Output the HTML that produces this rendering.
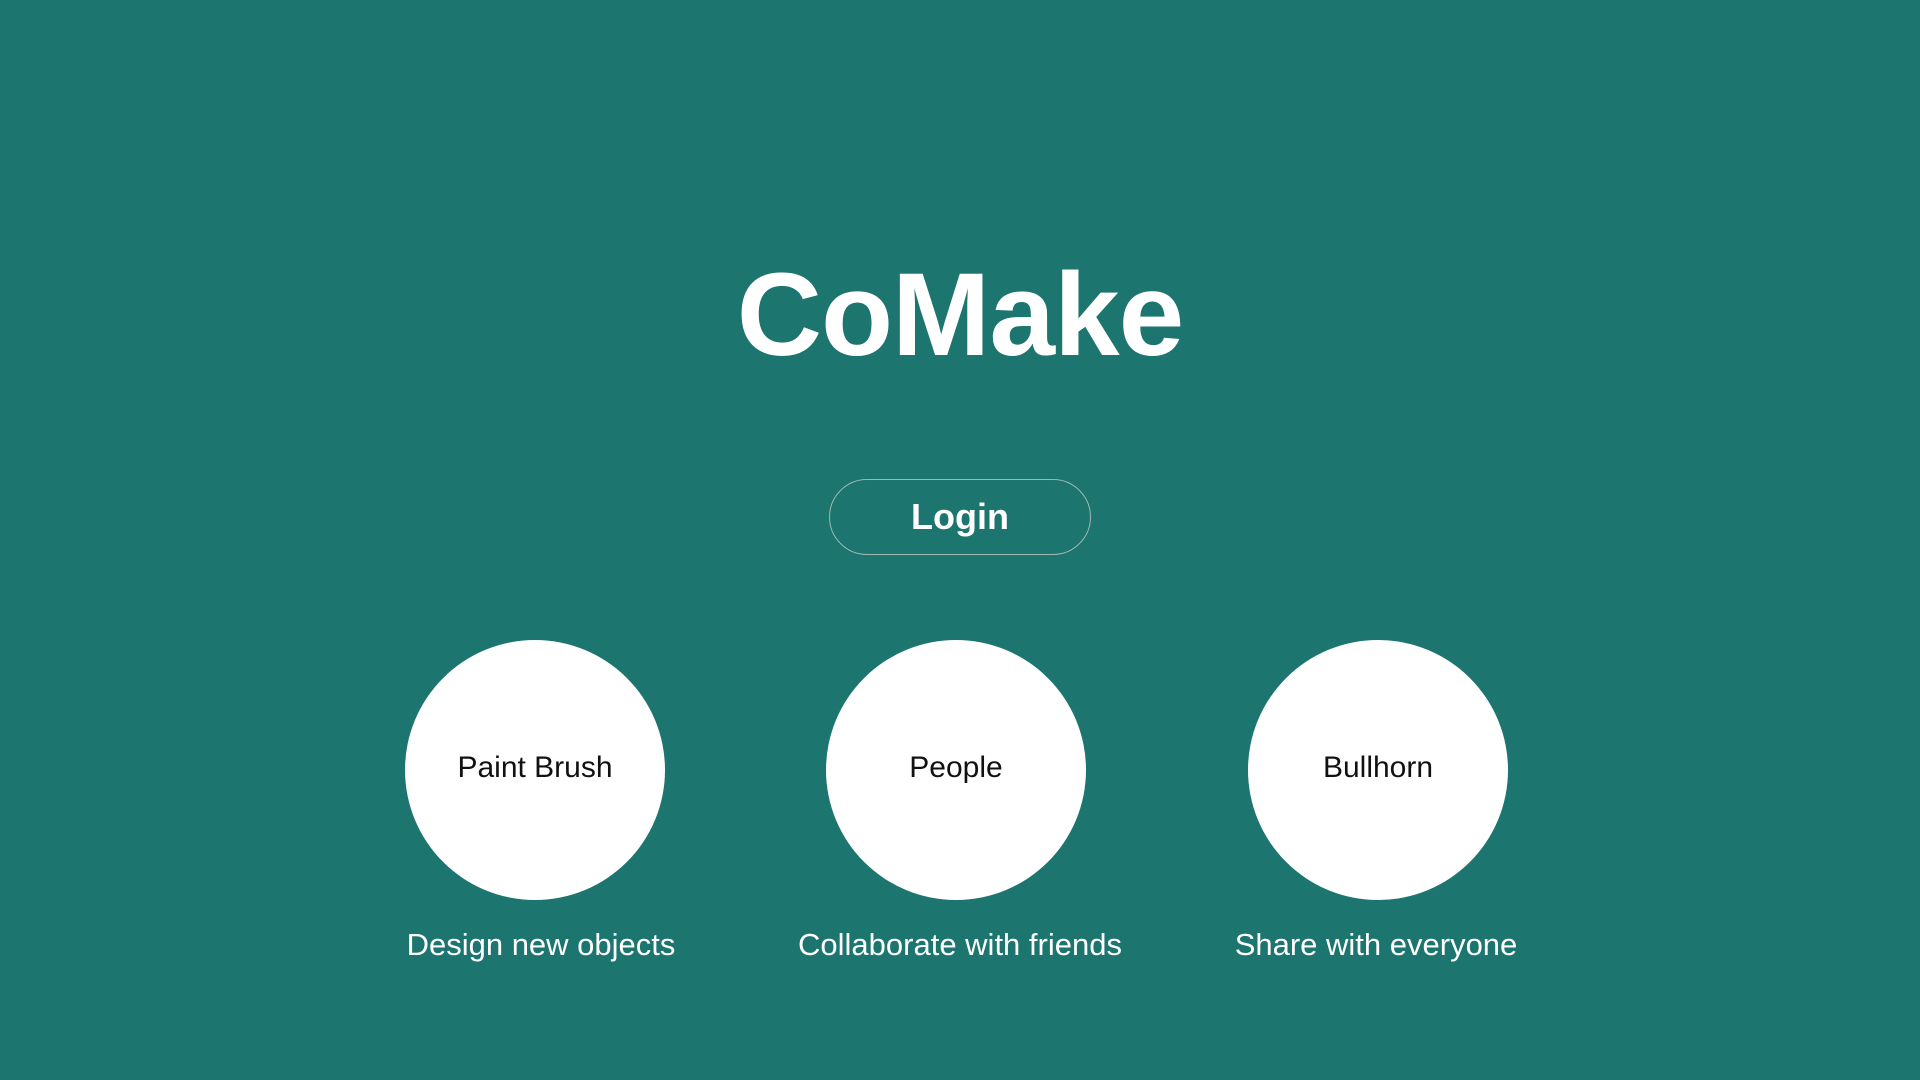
<!DOCTYPE html>
<html><head><meta charset="utf-8"><style>
html,body{margin:0;padding:0;width:1920px;height:1080px;overflow:hidden;background:#1c756e;font-family:"Liberation Sans",Arial,sans-serif;}
h1{position:absolute;left:0;width:1920px;text-align:center;color:#fff;font-size:118px;font-weight:bold;margin:0;top:245px;line-height:140px;letter-spacing:-1px;}
.btn{position:absolute;left:829px;top:479px;width:260px;height:74px;border:1px solid #9fb8b5;border-radius:38px;color:#fff;font-weight:bold;font-size:36px;line-height:74px;text-align:center;}
.c{position:absolute;width:260px;height:260px;border-radius:50%;background:#fff;top:640px;color:#111;font-size:30px;text-align:center;line-height:256px;}
.cap{position:absolute;top:925px;width:400px;text-align:center;color:#fff;font-size:31px;line-height:40px;}
</style></head><body>
<h1>CoMake</h1>
<div class="btn">Login</div>
<div class="c" style="left:405px">Paint Brush</div>
<div class="c" style="left:826px">People</div>
<div class="c" style="left:1248px">Bullhorn</div>
<div class="cap" style="left:341px">Design new objects</div>
<div class="cap" style="left:760px">Collaborate with friends</div>
<div class="cap" style="left:1176px">Share with everyone</div>
</body></html>
